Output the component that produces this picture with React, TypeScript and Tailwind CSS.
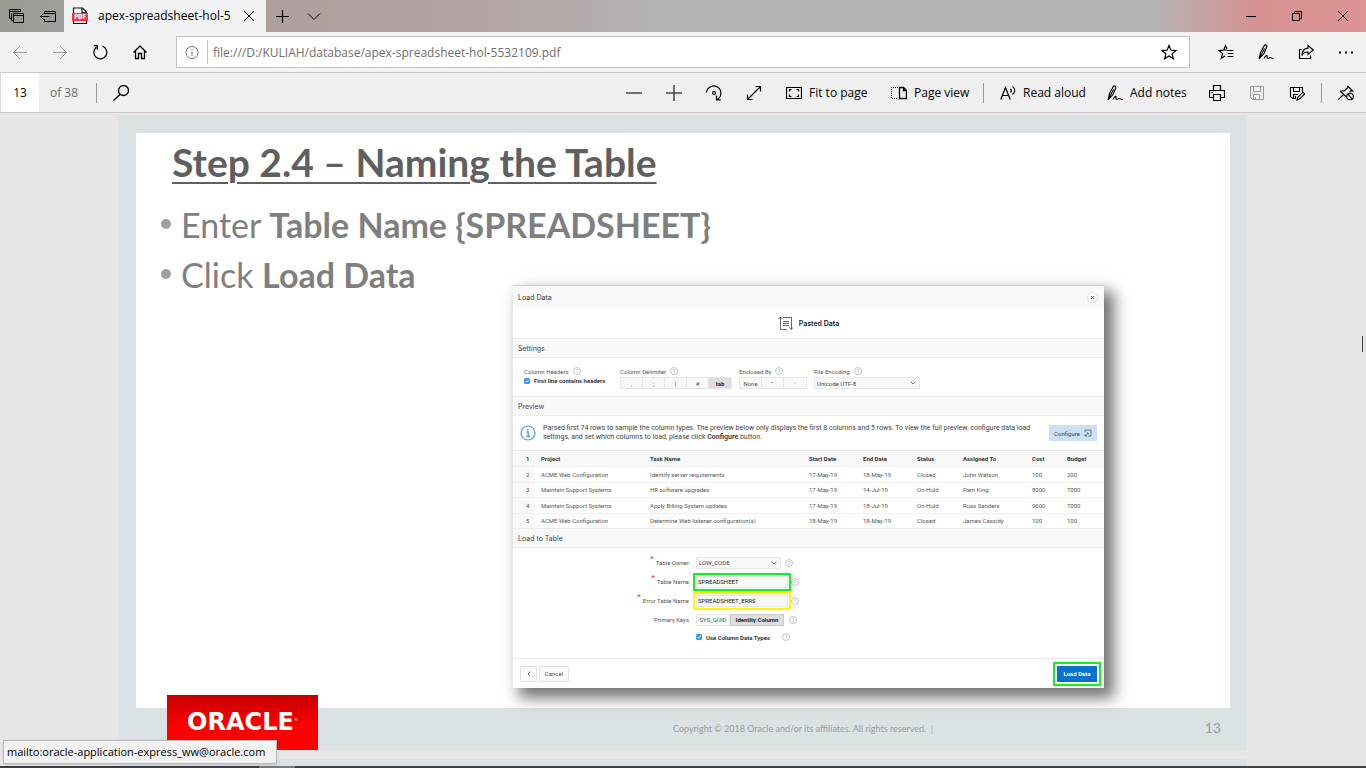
import type { ReactNode } from "react";

type IconProps = { children: ReactNode; size?: number; className?: string };

function Icon({ children, size = 16, className = "" }: IconProps) {
  return (
    <svg
      width={size}
      height={size}
      viewBox="0 0 16 16"
      fill="none"
      stroke="currentColor"
      strokeWidth="1"
      aria-hidden="true"
      className={`shrink-0 ${className}`}
    >
      {children}
    </svg>
  );
}

const icons = {
  tabs: (
    <g>
      <path d="M3.5 10.500H1.500V1.500H12.500V3.500M1.500 3.500H12.500" />
      <path d="M5.500 12.500H3.500V5.500" />
      <path d="M5.500 5.500H15.500V14.500H5.500ZM5.500 7.500H15.500" />
    </g>
  ),
  setAside: (
    <g>
      <path d="M4.500 6V3.500H15.500V13.500H4.500V11M4.500 5.500H15.500" />
      <path d="M9.500 8.500H0.500M3.500 5.500L0.500 8.500L3.500 11.500" />
    </g>
  ),
  close: <path d="M3 3L13 13M13 3L3 13" />,
  plus: <path d="M8.500 2V15M2 8.500H15" strokeWidth="1.200" />,
  chevron: <path d="M2 5.500L8 11.500L14 5.500" />,
  minimize: <path d="M3 8.500H13" />,
  restore: <path d="M3.500 5.500H10.500V12.500H3.500ZM5.500 5.500V3.500H12.500V10.500H10.500" />,
  back: <path d="M15 8.500H1.500M8 2L1.500 8.500L8 15" />,
  forward: <path d="M1 8.500H14.500M8 2L14.500 8.500L8 15" />,
  refresh: (
    <g strokeWidth="1.300">
      <path d="M10.500 2.200A6.500 6.500 0 1 1 4.300 3.200" />
      <path d="M1.800 1.700H5.200V5.500" />
    </g>
  ),
  home: <path d="M1.500 8.500L8 2L14.500 8.500M3.500 7V14.500H6.500V9.500H9.500V14.500H12.500V7" strokeWidth="1.300" />,
  info: (
    <g>
      <circle cx="8" cy="8.500" r="6" />
      <path d="M8 7.500V12M8 5V6.300" />
    </g>
  ),
  star: <path d="M8 1.500L9.900 6.200L15 6.500L11.100 9.800L12.400 14.800L8 12L3.600 14.800L4.900 9.800L1 6.500L6.100 6.200Z" strokeWidth="1.200" />,
  favorites: (
    <g strokeWidth="1.200">
      <path d="M9 5L7.500 1.500L5.700 6.200L1 6.500L4.600 9.600L3.300 14.300L7 12M8.700 6H6" />
      <path d="M8.500 6.500H15.500M9.500 9.500H15.500M9.500 12.500H15.500" />
    </g>
  ),
  pen: (
    <g strokeWidth="1.100">
      <path d="M1 15L2.500 8.500L6 2C6.800 .200 9.300 .600 8.700 3L6 9.500L1 15L6.500 4.500" />
      <path d="M6 14.500C7.500 11.500 9.500 10 9 12.500C8.800 15.500 11 14 12 13.500C13.200 13.200 14 14.500 15.700 14.500" />
    </g>
  ),
  share: (
    <g strokeWidth="1.200">
      <path d="M3.500 5.500H1.500V14.500H12.500V11.500" />
      <path d="M10 1.500L15.300 6L10 10.500V8C7 7.800 5 9.200 4 11.500C4 7 6.500 4.500 10 4.200Z" />
    </g>
  ),
  more: <path d="M1 8.500H3M7 8.500H9M13 8.500H15" strokeWidth="2" />,
  search: (
    <g strokeWidth="1.300">
      <circle cx="10.500" cy="5.500" r="5" />
      <path d="M7 9.500L.500 15.500" />
    </g>
  ),
  zoomOut: <path d="M0 8H16" strokeWidth="1.500" />,
  zoomIn: <path d="M0 8H16M8 0V16" strokeWidth="1.500" />,
  rotate: (
    <g strokeWidth="1.200">
      <path d="M.500 7.500A7.200 7.200 0 1 1 11.500 14.300M10.500 10.500V14.800H14.800" />
      <circle cx="8" cy="8" r="1.500" />
    </g>
  ),
  expand: <path d="M1.500 14.500L14.500 1.500M9.500 1.500H14.500V6.500M1.500 9.500V14.500H6.500" strokeWidth="1.200" />,
  fit: (
    <g strokeWidth="1.200">
      <path d="M.500 2.500H15.500V13.500H.500Z" />
      <path d="M3.500 6.500V4.500H5.500M10.500 4.500H12.500V6.500M12.500 9.500V11.500H10.500M5.500 11.500H3.500V9.500" />
    </g>
  ),
  pageView: (
    <g>
      <path d="M7 2.500H.500V13.500H7" strokeDasharray="1 1" />
      <path d="M8.500 2.500H12.500L15.500 5.500V13.500H8.500ZM12.500 2.500V5.500H15.500" strokeWidth="1.300" />
    </g>
  ),
  readAloud: (
    <g strokeWidth="1.200">
      <path d="M.800 14.500L5.500 2.500L10.200 14.500M2.500 10.500H8.500" />
      <path d="M10.500 4C11.500 5 11.500 6.500 10.500 7.500M12.500 1.500C15.500 3.500 15.500 7 12.500 9.500" />
    </g>
  ),
  print: (
    <g strokeWidth="1.200">
      <path d="M4.500 5.500V.500H11.500V5.500M4.500 12.500H.500V5.500H15.500V12.500H11.500M4.500 9.500H11.500V15.500H4.500ZM2.500 7.500H4" />
    </g>
  ),
  save: <path d="M1.500 1.500H14.500V14.500H3.500L1.500 12.500ZM4.500 1.500V6.500H11.500V1.500M4.500 14.500V9.500H10.500V14.500M6.500 12V14.500" />,
  saveAs: (
    <g strokeWidth="1.100">
      <path d="M13.500 7V2.500H1.500V11.500L3.500 13.500H7M4.500 2.500V6.500H10.500V2.500M4.500 13V9.500H9M6.500 11V13.500" />
      <path d="M8 15L9 12L14 7.200L15.700 9L10.800 13.800Z" />
    </g>
  ),
  pin: (
    <g strokeWidth="1.100">
      <path d="M.500 14.500L5.500 9.500M2 6L8.500 12M2.500 6.300C4 5.500 5 5.700 6.200 6L10 2.500L9.500 1L14.800 6L13 5.700L11.500 7" />
      <circle cx="12" cy="11.500" r="3.300" />
      <path d="M9.700 9.200L14.300 13.800" />
    </g>
  ),
};

function IconButton({ label, icon, className }: { label: string; icon: ReactNode; className: string }) {
  return (
    <button type="button" aria-label={label} className={`flex shrink-0 items-center justify-center ${className}`}>
      <Icon>{icon}</Icon>
    </button>
  );
}

function PdfIcon() {
  return (
    <svg width="16" height="18" viewBox="0 0 16 18" aria-hidden="true" className="shrink-0">
      <path d="M1.500 1H10.500L14.500 5V16.500H1.500Z" fill="#fff" stroke="#111" strokeWidth="1.200" />
      <path d="M10 1V5.500H14.500" fill="none" stroke="#111" strokeWidth="1.200" />
      <rect y="6" width="16" height="8" fill="#f33" />
      <text x="8" y="12.300" fontSize="6" fontWeight="800" textAnchor="middle" fill="#fff" fontFamily="Open Sans, sans-serif">
        PDF
      </text>
    </svg>
  );
}

function TitleBar() {
  return (
    <header className="flex h-8 shrink-0 bg-[linear-gradient(90deg,#989b93_0%,#a7a09c_8%,#b29f9f_24%,#b5a3a3_34%,#b4b4b4_50%,#b4b4b4_84%,#d79292_92%,#dc9494_100%)]">
      <IconButton label="Tabs you've set aside" icon={icons.tabs} className="w-8" />
      <IconButton label="Set these tabs aside" icon={icons.setAside} className="w-8" />
      <div className="flex w-[202px] items-center bg-[#f2f2f2] pl-2">
        <PdfIcon />
        <span className="ml-[10px] w-[137px] whitespace-nowrap text-[12px]">apex-spreadsheet-hol-5</span>
        <IconButton label="Close tab" icon={icons.close} className="w-7" />
      </div>
      <IconButton label="New tab" icon={icons.plus} className="w-8" />
      <IconButton label="Tab previews" icon={icons.chevron} className="w-8" />
      <div className="flex-1" />
      <IconButton label="Minimize" icon={icons.minimize} className="w-[46px]" />
      <IconButton label="Restore" icon={icons.restore} className="w-[46px]" />
      <IconButton label="Close" icon={icons.close} className="w-[46px]" />
    </header>
  );
}

function AddressBar() {
  return (
    <nav className="flex h-[41px] shrink-0 items-center border-b border-[#c9c9c9] bg-[#f2f2f2]">
      <IconButton label="Back" icon={icons.back} className="w-10 text-[#999]" />
      <IconButton label="Forward" icon={icons.forward} className="w-10 text-[#999]" />
      <IconButton label="Refresh" icon={icons.refresh} className="w-10" />
      <IconButton label="Home" icon={icons.home} className="w-10" />
      <div className="mx-4 flex h-8 flex-1 items-center border border-[#c4c4c4] bg-white">
        <IconButton label="Site information" icon={icons.info} className="w-[30px] text-[#777]" />
        <input
          aria-label="Address"
          defaultValue="file:///D:/KULIAH/database/apex-spreadsheet-hol-5532109.pdf"
          className="h-6 min-w-0 flex-1 border-l border-[#c4c4c4] pl-[5px] text-[12px] text-[#6d6d6d] outline-none"
        />
        <IconButton label="Add to favorites" icon={icons.star} className="w-10" />
      </div>
      <IconButton label="Favorites" icon={icons.favorites} className="w-10" />
      <IconButton label="Make a web note" icon={icons.pen} className="w-10" />
      <IconButton label="Share" icon={icons.share} className="w-10" />
      <IconButton label="Settings and more" icon={icons.more} className="w-10" />
    </nav>
  );
}

function ToolButton({ icon, label, className }: { icon: ReactNode; label: string; className: string }) {
  return (
    <button type="button" className={`flex shrink-0 items-center gap-[7px] whitespace-nowrap pl-3 ${className}`}>
      <Icon>{icon}</Icon>
      {label}
    </button>
  );
}

function PdfToolbar() {
  return (
    <div className="flex h-10 shrink-0 items-center border-b border-[#c9c9c9] bg-[#efefef] text-[12px]">
      <input aria-label="Page number" defaultValue="13" className="h-full w-[39px] border-l border-[#ddd] bg-white text-center outline-none" />
      <span className="w-[57px] pl-[11px] text-[#6d6d6d]">of 38</span>
      <span className="h-5 w-px bg-[#999]" />
      <IconButton label="Search" icon={icons.search} className="w-12" />
      <div className="flex-1" />
      <IconButton label="Zoom out" icon={icons.zoomOut} className="w-10 text-[#444]" />
      <IconButton label="Zoom in" icon={icons.zoomIn} className="w-10 text-[#444]" />
      <IconButton label="Rotate" icon={icons.rotate} className="w-10" />
      <IconButton label="Full screen" icon={icons.expand} className="w-10" />
      <ToolButton icon={icons.fit} label="Fit to page" className="w-[105px]" />
      <ToolButton icon={icons.pageView} label="Page view" className="w-[104px]" />
      <span className="h-5 w-px bg-[#999]" />
      <ToolButton icon={icons.readAloud} label="Read aloud" className="ml-1 w-[107px]" />
      <ToolButton icon={icons.pen} label="Add notes" className="w-[102px]" />
      <IconButton label="Print" icon={icons.print} className="w-10" />
      <IconButton label="Save" icon={icons.save} className="w-10 text-[#999]" />
      <IconButton label="Save as" icon={icons.saveAs} className="w-10" />
      <span className="ml-1 h-5 w-px bg-[#999]" />
      <IconButton label="Unpin toolbar" icon={icons.pin} className="w-11 pl-1" />
    </div>
  );
}

function Help() {
  return (
    <svg width="8" height="8" viewBox="0 0 8 8" fill="none" stroke="#aaa" aria-hidden="true" className="shrink-0">
      <circle cx="4" cy="4" r="3.500" strokeWidth=".700" />
      <path d="M3 3.200C3 2 5 2 5 3.200C5 4 4 3.900 4 4.800M4 5.400V6" strokeWidth=".600" />
    </svg>
  );
}

function Check({ label, className = "" }: { label: string; className?: string }) {
  return (
    <label className={`flex items-center gap-1 font-bold text-[#333] ${className}`}>
      <span className="grid size-[6px]">
        <input
          type="checkbox"
          defaultChecked
          className="col-start-1 row-start-1 size-[6px] appearance-none rounded-[1px] border border-[#3b99fc] checked:bg-[#3b99fc]"
        />
        <svg viewBox="0 0 6 6" fill="none" stroke="#fff" aria-hidden="true" className="pointer-events-none col-start-1 row-start-1 size-[6px]">
          <path d="M1.500 3L2.700 4.200L4.700 1.500" strokeWidth=".900" />
        </svg>
      </span>
      {label}
    </label>
  );
}

function Dropdown({ id, value, className }: { id: string; value: string; className: string }) {
  return (
    <div className={`grid h-3 items-center ${className}`}>
      <select id={id} className="col-start-1 row-start-1 h-3 w-full appearance-none rounded-[1px] border border-[#e6e6e6] bg-[#f8f8f8] pl-[2px] text-[#444]">
        <option>{value}</option>
      </select>
      <svg width="6" height="4" viewBox="0 0 6 4" fill="none" stroke="#666" aria-hidden="true" className="pointer-events-none col-start-1 row-start-1 mr-1 justify-self-end">
        <path d="M.500 .700L3 3L5.500 .700" strokeWidth=".900" />
      </svg>
    </div>
  );
}

function SectionTitle({ children }: { children: ReactNode }) {
  return (
    <h3 className="flex h-5 items-center border-y border-[#ececec] bg-[#f8f8f8] pl-[5px] font-['Inter',sans-serif] text-[7px] text-[#444]">
      {children}
    </h3>
  );
}

function Segments({ items, active }: { items: string[]; active?: string }) {
  return (
    <div className="flex h-3 rounded-[1px] border border-[#e6e6e6]">
      {items.map((item) => (
        <button
          key={item}
          type="button"
          className={
            item === active
              ? "w-[22px] bg-[#dedede] font-bold text-[#222]"
              : "w-[22px] border-r border-[#e6e6e6] bg-[#f8f8f8] last:border-r-0"
          }
        >
          {item}
        </button>
      ))}
    </div>
  );
}

function FieldLabel({ children, htmlFor }: { children: string; htmlFor?: string }) {
  return (
    <div className="flex h-2 items-center gap-1">
      <label htmlFor={htmlFor}>{children}</label>
      <Help />
    </div>
  );
}

function SettingsFields() {
  return (
    <div className="flex h-[38px] gap-[7px] pl-[11px] pt-[9px]">
      <div className="w-[89px]">
        <FieldLabel>Column Headers</FieldLabel>
        <Check label="First line contains headers" className="h-[11px] whitespace-nowrap" />
      </div>
      <div className="flex flex-col gap-[2px]">
        <FieldLabel>Column Delimiter</FieldLabel>
        <Segments items={[",", ";", "|", "#", "tab"]} active="tab" />
      </div>
      <div className="flex flex-col gap-[2px]">
        <FieldLabel>Enclosed By</FieldLabel>
        <Segments items={["None", "\"", "'"]} />
      </div>
      <div className="flex flex-col gap-[2px]">
        <FieldLabel htmlFor="encoding">File Encoding</FieldLabel>
        <Dropdown id="encoding" value="Unicode UTF-8" className="w-[106px]" />
      </div>
    </div>
  );
}

const columns = ["1", "Project", "Task Name", "Start Date", "End Date", "Status", "Assigned To", "Cost", "Budget"];
const rows = [
  ["2", "ACME Web Configuration", "Identify server requirements", "17-May-19", "18-May-19", "Closed", "John Watson", "100", "200"],
  ["3", "Maintain Support Systems", "HR software upgrades", "17-May-19", "14-Jul-19", "On-Hold", "Pam King", "8000", "7000"],
  ["4", "Maintain Support Systems", "Apply Billing System updates", "17-May-19", "18-Jul-19", "On-Hold", "Russ Sanders", "9600", "7000"],
  ["5", "ACME Web Configuration", "Determine Web listener configuration(s)", "18-May-19", "18-May-19", "Closed", "James Cassidy", "100", "100"],
];

function PreviewTable() {
  return (
    <table className="h-[78px] w-full table-fixed border-collapse whitespace-nowrap text-left text-[6px] text-[#555]">
      <colgroup>
        <col className="w-[22px]" />
        <col className="w-[109px]" />
        <col className="w-[159px]" />
        <col className="w-[54px]" />
        <col className="w-[54px]" />
        <col className="w-[46px]" />
        <col className="w-[69px]" />
        <col className="w-[35px]" />
        <col />
      </colgroup>
      <thead>
        <tr className="h-4 border-t border-[#e8e8e8] bg-[#f8f8f8] text-[#333]">
          {columns.map((c) => (
            <th key={c} className="p-0 pl-[6px] font-bold first:pl-[13px]">
              {c}
            </th>
          ))}
        </tr>
      </thead>
      <tbody>
        {rows.map((r) => (
          <tr key={r[0]} className="border-t border-[#f0f0f0]">
            {r.map((cell, i) => (
              <td key={i} className="p-0 pl-[6px] first:bg-[#f8f8f8] first:pl-[13px]">
                {cell}
              </td>
            ))}
          </tr>
        ))}
      </tbody>
    </table>
  );
}

function FormRow({ label, htmlFor, required, children }: { label: string; htmlFor?: string; required?: boolean; children: ReactNode }) {
  return (
    <div className="flex h-[19px] items-center">
      <label htmlFor={htmlFor} className="mr-1 flex w-[176px] justify-end gap-[2px]">
        {required && <span className="-mt-1 text-[8px] leading-[10px] text-[#ff2020]">*</span>}
        {label}
      </label>
      {children}
    </div>
  );
}

function LoadForm() {
  return (
    <div className="h-[110px] pt-[5px]">
      <FormRow label="Table Owner" htmlFor="owner" required>
        <Dropdown id="owner" value="LOW_CODE" className="ml-[3px] mr-1 w-[85px]" />
        <Help />
      </FormRow>
      <FormRow label="Table Name" htmlFor="table" required>
        <div className="flex w-[98px] border-2 border-[#0cf41c] p-px">
          <input id="table" defaultValue="SPREADSHEET" className="h-3 w-full border border-[#e6e6e6] bg-[#f8f8f8] pl-px text-[#222]" />
        </div>
        <Help />
      </FormRow>
      <FormRow label="Error Table Name" htmlFor="errors" required>
        <div className="flex w-[98px] border-2 border-[#fff800] p-px">
          <input id="errors" defaultValue="SPREADSHEET_ERR$" className="h-3 w-full border border-[#e6e6e6] bg-[#f8f8f8] pl-px text-[#222]" />
        </div>
        <Help />
      </FormRow>
      <FormRow label="Primary Keys">
        <div className="ml-[3px] mr-[5px] flex h-3 w-[88px]">
          <button type="button" className="w-[34px] border border-[#e6e6e6] bg-[#f8f8f8]">
            SYS_GUID
          </button>
          <button type="button" className="flex-1 whitespace-nowrap border border-[#c8c8c8] bg-[#dedede] font-bold text-[#222]">
            Identity Column
          </button>
        </div>
        <Help />
      </FormRow>
      <div className="flex h-4 items-center gap-3 pl-[183px]">
        <Check label="Use Column Data Types" />
        <Help />
      </div>
    </div>
  );
}

function LoadDataDialog() {
  return (
    <section
      aria-label="Load Data"
      className="ml-auto mr-[126px] w-full max-w-[591px] border-t border-[#ccc] bg-white font-['Roboto',sans-serif] text-[6px] leading-[9px] text-[#555] shadow-[8px_8px_14px_2px_rgba(0,0,0,0.55)]"
    >
      <div className="flex h-[22px] items-center justify-between bg-[#f8f8f8] pl-[5px] pr-[6px] font-['Inter',sans-serif] text-[7px] text-[#333]">
        <h2>Load Data</h2>
        <button type="button" aria-label="Close dialog" className="flex size-[11px] items-center justify-center rounded-full border border-[#e2e2e2] bg-white">
          <svg width="5" height="5" viewBox="0 0 5 5" stroke="#555" aria-hidden="true">
            <path d="M1 1L4 4M4 1L1 4" />
          </svg>
        </button>
      </div>
      <div className="flex h-[30px] items-center justify-center gap-[6px] font-['Inter',sans-serif] text-[7px] font-semibold text-[#222]">
        <svg width="15" height="15" viewBox="0 0 15 15" fill="none" stroke="#555" aria-hidden="true">
          <path d="M2.500 1V13.500H9M.500 3L2.500 1L4.500 3M5 1.500H13.500V13M11.500 11.500L13.500 13.500L14.800 11.500M5 5.500H11M5 7.500H11M5 9.500H11" strokeWidth=".900" />
        </svg>
        Pasted Data
      </div>
      <SectionTitle>Settings</SectionTitle>
      <SettingsFields />
      <SectionTitle>Preview</SectionTitle>
      <div className="flex h-[34px] items-center pl-[7px] pr-[7px]">
        <svg width="16" height="16" viewBox="0 0 16 16" fill="none" stroke="#4c9de0" aria-hidden="true" className="shrink-0">
          <circle cx="8" cy="8" r="7" strokeWidth="1.200" />
          <path d="M6.500 7H8.200V11.500M6.300 11.500H10M7.800 4V5.500" strokeWidth="1.300" />
        </svg>
        <p className="ml-[7px] flex-1 text-[7px] text-[#444]">
          Parsed first 74 rows to sample the column types. The preview below only displays the first 8 columns and 5 rows. To view the full preview, configure data load
          <br />
          settings, and set which columns to load, please click <b>Configure</b> button.
        </p>
        <button type="button" className="flex h-4 w-12 shrink-0 items-center justify-center gap-1 rounded-[1px] bg-[#c9e0f5] text-[#345]">
          Configure
          <svg width="8" height="8" viewBox="0 0 8 8" fill="none" stroke="#456" aria-hidden="true">
            <path d="M1 3V1H7V7H4M3.500 3V4.700H5M3.500 4.700L1 7M1 5.500V7H3" strokeWidth=".700" />
          </svg>
        </button>
      </div>
      <PreviewTable />
      <SectionTitle>Load to Table</SectionTitle>
      <LoadForm />
      <div className="flex h-[30px] items-center border-t border-[#ececec] pl-[7px] pr-[3px]">
        <button type="button" aria-label="Previous" className="flex h-4 w-[17px] items-center justify-center rounded-[1px] border border-[#e2e2e2] bg-[#fafafa]">
          <svg width="4" height="6" viewBox="0 0 4 6" fill="none" stroke="#666" aria-hidden="true">
            <path d="M3.200 .700L1 3L3.200 5.300" strokeWidth=".900" />
          </svg>
        </button>
        <button type="button" className="ml-[2px] h-4 w-[30px] rounded-[1px] border border-[#e2e2e2] bg-[#fafafa]">
          Cancel
        </button>
        <div className="ml-auto flex border-2 border-[#0cf41c] p-[2px]">
          <button type="button" className="h-4 w-[40px] whitespace-nowrap bg-[#0572ce] font-bold text-white">
            Load Data
          </button>
        </div>
      </div>
    </section>
  );
}

function Bullet({ children }: { children: ReactNode }) {
  return (
    <li className="flex h-[50px] items-center gap-[10px]">
      <span className="size-[10px] shrink-0 rounded-full bg-[#a0a0a0]" />
      <span>{children}</span>
    </li>
  );
}

function Slide() {
  return (
    <article className="mx-auto w-full max-w-[1128px] shrink-0 bg-[#dbe2e4] px-[17px] pt-[18px] font-['Lato',sans-serif]">
      <div className="h-[575px] bg-white">
        <h1 className="flex h-[66px] items-center pl-9 text-[39px] font-bold text-[#5f5f5f]">
          <span className="-mt-2 underline decoration-2 underline-offset-[5px]">Step 2.4 – Naming the Table</span>
        </h1>
        <ul className="pl-[25px] text-[34px] text-[#7f7f7f]">
          <Bullet>
            Enter <b>Table Name {"{SPREADSHEET}"}</b>
          </Bullet>
          <Bullet>
            Click <b>Load Data</b>
          </Bullet>
        </ul>
        <div className="-mt-[14px] flex">
          <LoadDataDialog />
        </div>
      </div>
      <footer className="flex h-[42px] items-center text-[#9b9b9b]">
        <div className="-mt-[14px] ml-[31px] flex h-[55px] w-[151px] shrink-0 items-center justify-center bg-linear-to-b from-[#c80000] to-[#ff0000] to-60% font-['DejaVu_Sans',sans-serif] text-[24px] font-bold text-white">
          ORACLE<sup className="text-[4px] font-normal">®</sup>
        </div>
        <p className="flex-1 whitespace-nowrap pl-[355px] text-[9px]">Copyright © 2018 Oracle and/or its affiliates. All rights reserved. &nbsp;|</p>
        <span className="pb-1 pr-[9px] text-[14px]">13</span>
      </footer>
    </article>
  );
}

export default function App() {
  return (
    <div className="relative flex h-screen flex-col overflow-hidden bg-[#e6e6e6] font-['Open_Sans',sans-serif] text-black">
      <TitleBar />
      <AddressBar />
      <PdfToolbar />
      <main className="flex min-h-0 flex-1 flex-col gap-[9px] overflow-hidden pt-[2px]">
        <Slide />
        <div className="mx-auto w-full max-w-[1128px] flex-1 bg-[#dbe2e4]" />
      </main>
      <div className="flex h-[2px] shrink-0 bg-[#3d3f42]">
        <span className="ml-[259px] w-9 bg-[#77797c]" />
      </div>
      <div className="absolute right-[3px] top-[336px] h-4 w-px bg-[#444]" />
      <div className="absolute bottom-1 left-[3px] flex h-6 items-center border border-[#b9b9b9] bg-[#f2f2f2] pl-[3px] pr-[11px] text-[11px] shadow-sm">
        mailto:oracle-application-express_ww@oracle.com
      </div>
    </div>
  );
}
